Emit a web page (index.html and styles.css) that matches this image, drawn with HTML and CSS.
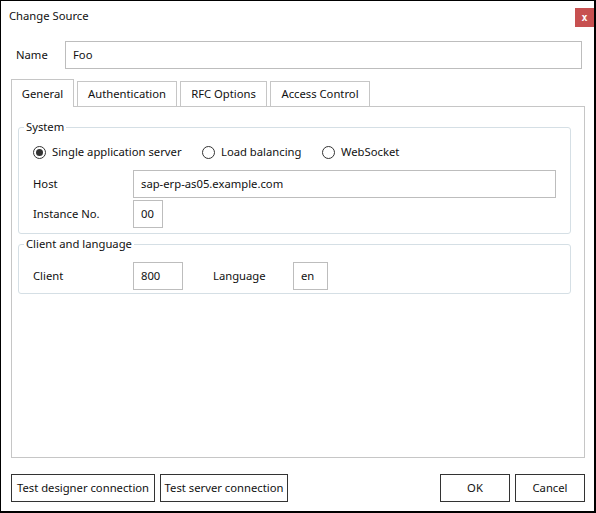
FILE: index.html
```html
<!DOCTYPE html>
<html>
<head>
<meta charset="utf-8">
<link rel="stylesheet" href="styles.css">
</head>
<body>
<div class="window">
  <div class="titlebar">
    <span class="title">Change Source</span>
    <span class="close">x</span>
  </div>
  <div class="name-row">
    <span class="name-label">Name</span>
    <div class="textbox name-box">Foo</div>
  </div>
  <div class="tabs">
    <div class="tab selected tab-general">General</div>
    <div class="tab tab-auth">Authentication</div>
    <div class="tab tab-rfc">RFC Options</div>
    <div class="tab tab-access">Access Control</div>
  </div>
  <div class="panel">
    <fieldset class="group system">
      <legend>System</legend>
      <div class="group-body system-body">
        <div class="radios">
          <span class="radio radio-single"><span class="dot checked"></span>Single application server</span>
          <span class="radio radio-load"><span class="dot"></span>Load balancing</span>
          <span class="radio"><span class="dot"></span>WebSocket</span>
        </div>
        <div class="row row-host">
          <span class="lbl">Host</span>
          <div class="textbox host-box">sap-erp-as05.example.com</div>
        </div>
        <div class="row row-inst">
          <span class="lbl">Instance No.</span>
          <div class="textbox inst-box">00</div>
        </div>
      </div>
    </fieldset>
    <fieldset class="group client">
      <legend>Client and language</legend>
      <div class="group-body client-body">
        <div class="row">
          <span class="lbl">Client</span>
          <div class="textbox client-box">800</div>
          <span class="lbl lang-lbl">Language</span>
          <div class="textbox lang-box">en</div>
        </div>
      </div>
    </fieldset>
  </div>
  <div class="buttons">
    <div class="btn btn-designer">Test designer connection</div>
    <div class="btn btn-server">Test server connection</div>
    <div class="spacer"></div>
    <div class="btn btn-ok">OK</div>
    <div class="btn btn-cancel">Cancel</div>
  </div>
</div>
</body>
</html>
```

FILE: styles.css
```css
* { box-sizing: border-box; }
body {
  margin: 0;
  font-family: "Noto Sans", "DejaVu Sans", sans-serif;
  font-size: 11.25px;
  line-height: 16px;
  color: #111;
  background: #fff;
}
.window {
  width: 596px;
  height: 513px;
  border: 1px solid #000;
  border-right-width: 2px;
  border-bottom-width: 2px;
  background: #fff;
  display: flex;
  flex-direction: column;
}
.titlebar {
  height: 40px;
  flex: none;
  display: flex;
  justify-content: space-between;
  align-items: flex-start;
  padding-left: 8px;
}
.title { margin-top: 7px; }
.close {
  margin-top: 7px;
  width: 19px;
  height: 19px;
  background: #c75050;
  color: #fff;
  font: bold 10px "DejaVu Sans Mono", monospace;
  display: flex;
  align-items: center;
  justify-content: center;
}
.name-row {
  display: flex;
  align-items: center;
  height: 28px;
  flex: none;
}
.name-label { width: 64px; padding-left: 15px; }
.textbox {
  border: 1px solid #bdbdbd;
  height: 28px;
  display: flex;
  align-items: center;
  padding-left: 7px;
  background: #fff;
  white-space: nowrap;
}
.name-box { width: 517px; }
.tabs {
  display: flex;
  gap: 3px;
  margin: 10px 0 0 10px;
  height: 27px;
  align-items: flex-end;
  position: relative;
  z-index: 1;
  flex: none;
}
.tab {
  height: 25px;
  border: 1px solid #c6c6c6;
  border-bottom: none;
  display: flex;
  align-items: center;
  justify-content: center;
  background: #fff;
  white-space: nowrap;
}
.tab.selected {
  height: 28px;
  margin-bottom: -1px;
  padding-top: 1px;
}
.tab-general { width: 63px; }
.tab-auth { width: 100px; }
.tab-rfc { width: 87px; }
.tab-access { width: 100px; }
.panel {
  margin-left: 10px;
  width: 574px;
  height: 352px;
  border: 1px solid #c6c6c6;
  flex: none;
}
.group {
  margin: 0;
  padding: 0;
  border: 1px solid #d5dfe5;
  border-radius: 3px;
  min-width: 0;
}
.group legend {
  padding: 0 2px;
  margin-left: 5px;
  line-height: 16px;
}
.system { margin: 12px 13px 0 6px; }
.client { margin: 2px 13px 0 6px; }
.group-body { padding-left: 14px; }
.system-body { padding-top: 9px; padding-bottom: 5px; }
.client-body { padding-top: 10px; padding-bottom: 3px; }
.radios {
  display: flex;
  align-items: center;
  height: 16px;
}
.radio { display: flex; align-items: center; white-space: nowrap; }
.radio-single { width: 169px; }
.radio-load { width: 120px; }
.dot {
  width: 13px;
  height: 13px;
  border: 1px solid #333;
  border-radius: 50%;
  margin-right: 6px;
  display: flex;
  align-items: center;
  justify-content: center;
  flex: none;
}
.dot.checked::after {
  content: "";
  width: 7px;
  height: 7px;
  border-radius: 50%;
  background: #333;
}
.row { display: flex; align-items: center; height: 28px; }
.row-host { margin-top: 10px; }
.row-inst { margin-top: 2px; }
.lbl { width: 100px; white-space: nowrap; }
.lang-lbl { width: 80px; margin-left: 30px; }
.host-box { width: 423px; }
.inst-box { width: 30px; }
.client-box { width: 50px; }
.lang-box { width: 35px; }
.buttons {
  display: flex;
  height: 28px;
  margin: 16px 9px 0 10px;
  flex: none;
}
.btn {
  border: 1px solid #333;
  display: flex;
  align-items: center;
  justify-content: center;
  background: #fff;
  white-space: nowrap;
}
.btn-designer { width: 144px; }
.btn-server { width: 128px; margin-left: 5px; }
.spacer { flex: 1; }
.btn-ok { width: 70px; }
.btn-cancel { width: 70px; margin-left: 5px; }
```
